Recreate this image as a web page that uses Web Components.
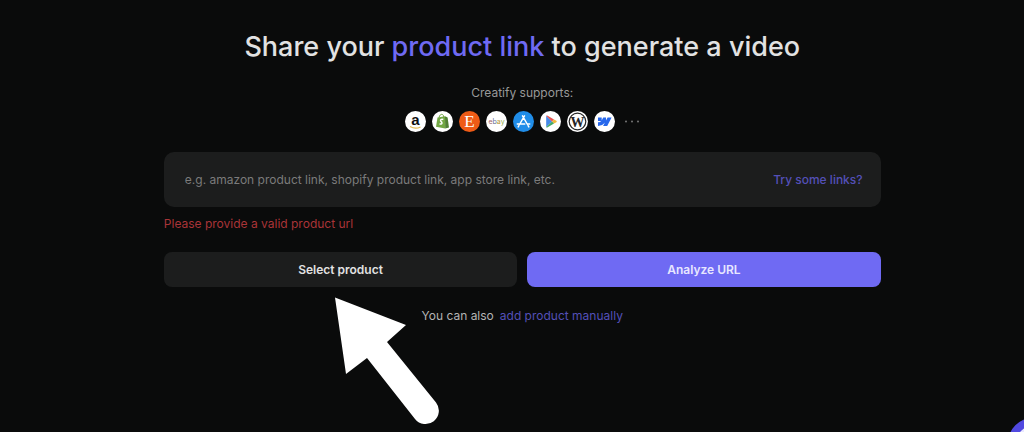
<!DOCTYPE html>
<html lang="en">
<head>
<meta charset="utf-8">
<meta name="viewport" content="width=device-width, initial-scale=1">
<title>Share your product link</title>
<style>
  body { margin: 0; background: #0a0b0b; color: #b4b4b4; font: 12px/20px Inter, "Liberation Sans", sans-serif; --accent: #6f6af3; --link: #5450b8; --panel: #1c1d1d; }
</style>
</head>
<body>
<product-page>
  <platform-list></platform-list>
  <link-form></link-form>
</product-page>
<pointer-arrow></pointer-arrow>
<chat-bubble></chat-bubble>

<template id="page-tpl">
  <style>
    :host { display: block; width: 70%; margin-left: 16%; padding-top: 29px; }
    h1 { margin: 0 0 18px; font-size: 27px; line-height: 36px; font-weight: 500; text-align: center; color: #e2e2e2; }
    h1 span { color: var(--accent); }
  </style>
  <h1>Share your <span>product link</span> to generate a video</h1>
  <slot></slot>
</template>

<template id="platforms-tpl">
  <style>
    :host { display: block; text-align: center; color: #999; margin-bottom: 20px; }
    p { margin: 0 0 8px; }
    div { display: flex; justify-content: center; align-items: center; gap: 6px; }
    svg { display: block; width: 21px; height: 21px; overflow: visible; }
    .more { width: 16px; margin-left: 3px; }
  </style>
  <p>Creatify supports:</p>
  <div>
    <svg viewBox="0 0 21 21" aria-label="Amazon"><circle cx="10.500" cy="10.500" r="10.500" fill="#fff"/><text x="10.500" y="14" text-anchor="middle" font-family="Liberation Sans" font-weight="700" font-size="15" fill="#111">a</text><path d="M5 15.600q5.500 3 10.500.3" fill="none" stroke="#e5b94e" stroke-width="1.100"/></svg>
    <svg viewBox="0 0 21 21" aria-label="Shopify"><circle cx="10.500" cy="10.500" r="10.500" fill="#fff"/><path d="M5.500 6.500 13 5.300 13.200 17.500 4 15.800z" fill="#72a744"/><path d="m13 5.300 2.600 1.300L17 16.600l-3.800.9z" fill="#508033"/><path d="M7 6.500C8 2.300 11.500 2.300 11.700 6" fill="none" stroke="#72a744"/><path d="M11.300 8.500c-2.300-.8-3.500.8-2.300 1.900 1.400 1.100 1.700 3.400-1.500 2.400" fill="none" stroke="#fff" stroke-width="1.400"/></svg>
    <svg viewBox="0 0 21 21" aria-label="Etsy"><circle cx="10.500" cy="10.500" r="10.500" fill="#ee5b16"/><text x="10.500" y="16" text-anchor="middle" font-family="Liberation Serif" font-size="17" fill="#fff">E</text></svg>
    <svg viewBox="0 0 21 21" aria-label="eBay"><circle cx="10.500" cy="10.500" r="10.500" fill="#fff"/><text x="10.500" y="12.500" text-anchor="middle" font-family="Inter" font-size="7"><tspan fill="#a36568">e</tspan><tspan fill="#66709a">b</tspan><tspan fill="#b89a40">a</tspan><tspan fill="#91ab45">y</tspan></text></svg>
    <svg viewBox="0 0 21 21" aria-label="App Store"><circle cx="10.500" cy="10.500" r="10.500" fill="#208de8"/><path d="m11.500 4.800-5 8.700m3-8.700 5 8.700M4.300 12.900h7.500m2.600 0h2.300M5.900 14.700l-.7 1.200m9.900-1.200.7 1.200" fill="none" stroke="#fff" stroke-width="1.500" stroke-linecap="round"/></svg>
    <svg viewBox="0 0 21 21" aria-label="Google Play"><circle cx="10.500" cy="10.500" r="10.500" fill="#fff"/><path d="M6.200 4.700v11.600l5.800-5.800z" fill="#4589e8"/><path d="M6.200 4.700q.7-.5 1.500 0L14 8.500l-2 2z" fill="#e75350"/><path d="M14 8.500l2.400 1.300q.8.700 0 1.400L14 12.500l-2-2z" fill="#f1b93b"/><path d="m6.200 16.300 5.800-5.800 2 2-6.300 3.800q-.8.500-1.500 0z" fill="#45a965"/></svg>
    <svg viewBox="0 0 21 21" aria-label="WordPress"><circle cx="10.500" cy="10.500" r="10.500" fill="#fff"/><circle cx="10.500" cy="10.500" r="8.300" fill="#fff" stroke="#252525" stroke-width="1.200"/><text x="10.500" y="15.500" text-anchor="middle" font-family="Liberation Serif" font-weight="700" font-size="14" fill="#252525">W</text></svg>
    <svg viewBox="0 0 21 21" aria-label="Webflow"><circle cx="10.500" cy="10.500" r="10.500" fill="#fff"/><path d="M17.600 6.500 13.200 15H9.100l1.800-3.500C9.400 13.500 7.200 14.700 4 15v-3.500s2.100-.1 3.300-1.400H4V6.500h3.700v3l1.500-3h2.800v3l1.600-3z" fill="#2768ec"/></svg>
    <svg class="more" viewBox="0 0 16 21" aria-label="More"><g fill="#777"><circle cx="2" cy="10.500" r="1"/><circle cx="8" cy="10.500" r="1"/><circle cx="14" cy="10.500" r="1"/></g></svg>
  </div>
</template>

<template id="form-tpl">
  <style>
    :host { display: block; }
    form { margin: 0; }
    .field { display: flex; align-items: center; gap: 16px; background: var(--panel); border-radius: 10px; padding: 0 18px 0 21px; height: 55px; }
    input { flex: 1; min-width: 0; padding: 0; border: 0; outline: 0; background: none; color: #ddd; font: 12px/20px Inter, sans-serif; }
    input::placeholder { color: #7b7b7b; opacity: 1; }
    a { color: var(--link); text-decoration: none; }
    .field a { font-weight: 500; }
    .error { margin: 7px 0 18px; color: #a93438; }
    .actions { display: grid; grid-template-columns: 1fr 1fr; gap: 10px; }
    button { height: 35px; border: 0; border-radius: 8px; padding: 0 16px; font: 600 12px/20px Inter, sans-serif; background: var(--panel); color: #e2e2e2; }
    button.primary { background: var(--accent); color: #e8e7ff; }
    .manual { display: flex; justify-content: center; gap: 6px; margin: 19px 0 0; }
  </style>
  <form>
    <div class="field">
      <input type="url" aria-label="Product link" aria-describedby="error" placeholder="e.g. amazon product link, shopify product link, app store link, etc.">
      <a href="#examples">Try some links?</a>
    </div>
    <p class="error" id="error">Please provide a valid product url</p>
    <div class="actions">
      <button type="button">Select product</button>
      <button type="button" class="primary">Analyze URL</button>
    </div>
    <p class="manual"><span>You can also</span><a href="#manual">add product manually</a></p>
  </form>
</template>

<template id="arrow-tpl">
  <style>
    :host { position: absolute; top: 297px; left: calc(50% - 178px); width: 106px; height: 129px; pointer-events: none; }
    svg { display: block; width: 106px; height: 129px; }
  </style>
  <svg viewBox="0 0 106 129" aria-hidden="true"><path d="M1 .5 72 28 53 45 102 105.500A13.200 13.200 0 0 1 81 122L33 61 12 77z" fill="#fff"/></svg>
</template>

<template id="bubble-tpl">
  <style>
    :host { position: fixed; right: -34px; bottom: -36px; }
    button { display: block; width: 50px; height: 50px; padding: 0; border: 8px solid #5149e0; border-radius: 50%; background: #e9e8ff; }
  </style>
  <button type="button" aria-label="Open chat"></button>
</template>

<script>
  const define = (name, templateId) => customElements.define(name, class extends HTMLElement {
    constructor() {
      super();
      this.attachShadow({ mode: "open" }).append(document.getElementById(templateId).content.cloneNode(true));
    }
  });
  define("product-page", "page-tpl");
  define("platform-list", "platforms-tpl");
  define("link-form", "form-tpl");
  define("pointer-arrow", "arrow-tpl");
  define("chat-bubble", "bubble-tpl");
</script>
</body>
</html>
